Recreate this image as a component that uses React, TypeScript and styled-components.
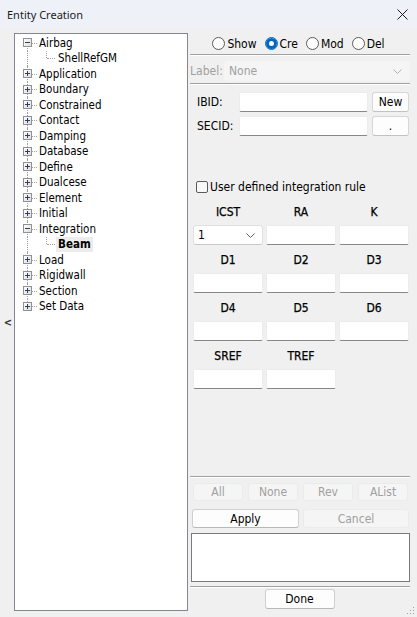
import React from "react"
import styled, { createGlobalStyle } from "styled-components"

const GlobalStyle = createGlobalStyle`
  html, body {
    margin: 0;
    padding: 0;
    background: #f0f0f0;
  }
  body {
    font-family: "DejaVu Sans Condensed", "DejaVu Sans", sans-serif;
    font-size: 12px;
    color: #000;
  }
`

type TreeItem = {
    label: string
    level: number
    expander?: "plus" | "minus"
    selected?: boolean
    last?: boolean
    first?: boolean
}

const tree: TreeItem[] = [
    { label: "Airbag", level: 0, expander: "minus", first: true },
    { label: "ShellRefGM", level: 1 },
    { label: "Application", level: 0, expander: "plus" },
    { label: "Boundary", level: 0, expander: "plus" },
    { label: "Constrained", level: 0, expander: "plus" },
    { label: "Contact", level: 0, expander: "plus" },
    { label: "Damping", level: 0, expander: "plus" },
    { label: "Database", level: 0, expander: "plus" },
    { label: "Define", level: 0, expander: "plus" },
    { label: "Dualcese", level: 0, expander: "plus" },
    { label: "Element", level: 0, expander: "plus" },
    { label: "Initial", level: 0, expander: "plus" },
    { label: "Integration", level: 0, expander: "minus" },
    { label: "Beam", level: 1, selected: true },
    { label: "Load", level: 0, expander: "plus" },
    { label: "Rigidwall", level: 0, expander: "plus" },
    { label: "Section", level: 0, expander: "plus" },
    { label: "Set Data", level: 0, expander: "plus", last: true },
]

const fields = ["ICST", "RA", "K", "D1", "D2", "D3", "D4", "D5", "D6", "SREF", "TREF"]

const Expander: React.FC<{ kind: "plus" | "minus" }> = ({ kind }) => (
    <ExpanderSvg width="9" height="9" viewBox="0 0 9 9">
        <defs>
            <linearGradient id={"eg" + kind} x1="0" y1="0" x2="1" y2="1">
                <stop offset="0" stopColor="#ffffff" />
                <stop offset="1" stopColor="#dcdcdc" />
            </linearGradient>
        </defs>
        <rect x="0.5" y="0.5" width="8" height="8" fill={"url(#eg" + kind + ")"} stroke="#919191" />
        <line x1="2" y1="4.5" x2="7" y2="4.5" stroke="#2b3f6b" />
        {kind === "plus" && <line x1="4.5" y1="2" x2="4.5" y2="7" stroke="#2b3f6b" />}
    </ExpanderSvg>
)

export default function App() {
    return (
        <Window>
            <GlobalStyle />
            <TitleBar>
                <Title>Entity Creation</Title>
                <svg width="11" height="11" viewBox="0 0 11 11">
                    <line x1="0.5" y1="0.5" x2="10.5" y2="10.5" stroke="#1a1a1a" strokeWidth="1" />
                    <line x1="10.5" y1="0.5" x2="0.5" y2="10.5" stroke="#1a1a1a" strokeWidth="1" />
                </svg>
            </TitleBar>
            <Body>
                <Collapser>&lt;</Collapser>
                <TreeBox>
                    {tree.map((item) => (
                        <TreeRow key={item.label}>
                            <Gutter $up={!item.first || item.level > 0} $down={!item.last} $dash={item.level === 0}>
                                {item.expander && <Expander kind={item.expander} />}
                            </Gutter>
                            {item.level === 1 && <ChildGutter />}
                            <TreeLabel $selected={item.selected}>{item.label}</TreeLabel>
                        </TreeRow>
                    ))}
                </TreeBox>
                <Panel>
                    <RadioRow>
                        <RadioItem><Radio /><span>Show</span></RadioItem>
                        <RadioItem><Radio $checked /><span>Cre</span></RadioItem>
                        <RadioItem><Radio /><span>Mod</span></RadioItem>
                        <RadioItem><Radio /><span>Del</span></RadioItem>
                    </RadioRow>
                    <Separator />
                    <LabelRow>
                        <DimText>Label:</DimText>
                        <Combo $disabled>
                            <span>None</span>
                            <Chevron color="#b0b0b0" />
                        </Combo>
                    </LabelRow>
                    <Separator $top={2} />
                    <IdRow $top={6}>
                        <IdLabel>IBID:</IdLabel>
                        <Edit $width={129} />
                        <SmallButton>New</SmallButton>
                    </IdRow>
                    <IdRow $top={3}>
                        <IdLabel>SECID:</IdLabel>
                        <Edit $width={129} />
                        <SmallButton>.</SmallButton>
                    </IdRow>
                    <CheckRow>
                        <CheckBox />
                        <span>User defined integration rule</span>
                    </CheckRow>
                    <FieldGrid>
                        {fields.map((f) => (
                            <Field key={f}>
                                <FieldLabel>{f}</FieldLabel>
                                {f === "ICST" ? (
                                    <Combo>
                                        <span>1</span>
                                        <Chevron color="#606060" />
                                    </Combo>
                                ) : (
                                    <Edit />
                                )}
                            </Field>
                        ))}
                    </FieldGrid>
                    <Spacer />
                    <Separator />
                    <ButtonRow $top={5} $gap={5} $left={3}>
                        <PushButton $width={50} $disabled>All</PushButton>
                        <PushButton $width={50} $disabled>None</PushButton>
                        <PushButton $width={50} $disabled>Rev</PushButton>
                        <PushButton $width={50} $disabled>AList</PushButton>
                    </ButtonRow>
                    <ButtonRow $top={8} $gap={4} $left={2}>
                        <PushButton $width={107} $height={19}>Apply</PushButton>
                        <PushButton $width={106} $height={19} $disabled>Cancel</PushButton>
                    </ButtonRow>
                    <MessageBox />
                    <Separator $top={4} />
                    <DoneRow>
                        <PushButton $width={70} $height={20}>Done</PushButton>
                    </DoneRow>
                </Panel>
            </Body>
            <Grip width="8" height="8" viewBox="0 0 8 8">
                <rect x="6" y="0" width="1" height="1" fill="#a0a0a0" />
                <rect x="3" y="3" width="1" height="1" fill="#a0a0a0" />
                <rect x="6" y="3" width="1" height="1" fill="#a0a0a0" />
                <rect x="0" y="6" width="1" height="1" fill="#a0a0a0" />
                <rect x="3" y="6" width="1" height="1" fill="#a0a0a0" />
                <rect x="6" y="6" width="1" height="1" fill="#a0a0a0" />
            </Grip>
        </Window>
    )
}

const Chevron: React.FC<{ color: string }> = ({ color }) => (
    <svg width="9" height="5" viewBox="0 0 9 5">
        <polyline points="0.5,0.5 4.5,4.5 8.5,0.5" fill="none" stroke={color} strokeWidth="1" />
    </svg>
)

const Window = styled.div`
    position: relative;
    width: 417px;
    height: 617px;
    display: flex;
    flex-direction: column;
    overflow: hidden;
    background: #f0f0f0;
`
const TitleBar = styled.div`
    height: 28px;
    flex: none;
    display: flex;
    align-items: center;
    justify-content: space-between;
    padding: 0 9px 0 7px;
    background: #eef2f8;
`
const Title = styled.span`
    font-family: "Noto Sans", "Open Sans", sans-serif;
    font-size: 11px;
    color: #1a1a1a;
`
const Body = styled.div`
    flex: 1;
    display: flex;
    padding: 5px 7px 6px 0;
    min-height: 0;
`
const Collapser = styled.div`
    width: 14px;
    display: flex;
    align-items: center;
    justify-content: center;
    font-family: "DejaVu Sans", sans-serif;
    font-size: 10px;
    font-weight: bold;
    color: #333;
    padding-left: 2px;
    box-sizing: border-box;
`
const TreeBox = styled.div`
    width: 174px;
    box-sizing: border-box;
    border: 1px solid #828790;
    background: #fff;
    padding-top: 1px;
`
const TreeRow = styled.div`
    height: 15.5px;
    display: flex;
    align-items: stretch;
    padding-left: 3px;
`
const Gutter = styled.span<{ $up?: boolean; $down?: boolean; $dash?: boolean }>`
    position: relative;
    width: 19px;
    flex: none;
    display: flex;
    align-items: center;
    &::before {
        content: "";
        position: absolute;
        left: 9px;
        top: ${(p) => (p.$up ? "0" : "50%")};
        bottom: ${(p) => (p.$down ? "0" : "50%")};
        border-left: 1px dotted #a0a0a0;
    }
    &::after {
        content: "";
        display: ${(p) => (p.$dash ? "block" : "none")};
        position: absolute;
        left: 14px;
        right: 0;
        top: 50%;
        border-top: 1px dotted #a0a0a0;
    }
`
const ChildGutter = styled.span`
    position: relative;
    width: 19px;
    flex: none;
    &::before {
        content: "";
        position: absolute;
        left: 9px;
        top: 0;
        height: 50%;
        border-left: 1px dotted #a0a0a0;
    }
    &::after {
        content: "";
        position: absolute;
        left: 10px;
        right: 1px;
        top: 50%;
        border-top: 1px dotted #a0a0a0;
    }
`
const ExpanderSvg = styled.svg`
    position: relative;
    z-index: 1;
    margin-left: 5px;
    display: block;
`
const TreeLabel = styled.span<{ $selected?: boolean }>`
    display: flex;
    align-items: center;
    font-size: 11.5px;
    margin-left: ${(p) => (p.$selected ? "0" : "2px")};
    padding: 0 ${(p) => (p.$selected ? "2px" : "0")};
    font-weight: ${(p) => (p.$selected ? "bold" : "normal")};
    background: ${(p) => (p.$selected ? "#ececec" : "transparent")};
    white-space: nowrap;
`
const Panel = styled.div`
    width: 220px;
    margin-left: 2px;
    display: flex;
    flex-direction: column;
`
const RadioRow = styled.div`
    height: 21px;
    display: flex;
    align-items: center;
    justify-content: center;
    gap: 8px;
    padding-right: 3px;
`
const RadioItem = styled.label`
    display: flex;
    align-items: center;
    gap: 2px;
`
const Radio = styled.span<{ $checked?: boolean }>`
    width: 13px;
    height: 13px;
    box-sizing: border-box;
    border-radius: 50%;
    border: 1px solid ${(p) => (p.$checked ? "#0067c0" : "#5a5a5a")};
    background: #fff;
    box-shadow: ${(p) => (p.$checked ? "inset 0 0 0 3px #0067c0" : "none")};
`
const Separator = styled.div<{ $top?: number }>`
    margin-top: ${(p) => p.$top ?? 0}px;
    height: 0;
    border-top: 1px solid #a0a0a0;
    border-bottom: 1px solid #fff;
    flex: none;
`
const LabelRow = styled.div`
    margin-top: 5px;
    height: 20px;
    display: flex;
    align-items: center;
`
const DimText = styled.span`
    width: 34px;
    color: #a0a0a0;
`
const Combo = styled.div<{ $disabled?: boolean }>`
    flex: 1;
    height: 20px;
    box-sizing: border-box;
    display: flex;
    align-items: center;
    justify-content: space-between;
    padding: 0 7px 0 4px;
    border-radius: 3px;
    border: 1px solid ${(p) => (p.$disabled ? "#f5f5f5" : "#e0e0e0")};
    border-bottom-color: ${(p) => (p.$disabled ? "#f5f5f5" : "#c8c8c8")};
    background: ${(p) => (p.$disabled ? "#f5f5f5" : "#fff")};
    color: ${(p) => (p.$disabled ? "#a0a0a0" : "#000")};
`
const IdRow = styled.div<{ $top: number }>`
    margin-top: ${(p) => p.$top}px;
    height: 21px;
    display: flex;
    align-items: center;
    padding-left: 7px;
    gap: 3px;
`
const IdLabel = styled.span`
    width: 39px;
`
const Edit = styled.div<{ $width?: number }>`
    width: ${(p) => (p.$width ? p.$width + "px" : "auto")};
    height: 20px;
    box-sizing: border-box;
    background: #fff;
    border: 1px solid #ececec;
    border-bottom: 1px solid #878787;
    border-radius: 2px;
`
const SmallButton = styled.div`
    width: 37px;
    height: 20px;
    margin-left: 1px;
    box-sizing: border-box;
    display: flex;
    align-items: center;
    justify-content: center;
    background: #fdfdfd;
    border: 1px solid #d6d6d6;
    border-bottom-color: #c2c2c2;
    border-radius: 3px;
`
const CheckRow = styled.label`
    margin-top: 43px;
    height: 15px;
    display: flex;
    align-items: center;
    gap: 2px;
    padding-left: 6px;
`
const CheckBox = styled.span`
    width: 12px;
    height: 12px;
    box-sizing: border-box;
    border: 1px solid #5a5a5a;
    border-radius: 2px;
    background: #f8f8f8;
`
const FieldGrid = styled.div`
    margin-top: 8px;
    padding-left: 3px;
    display: grid;
    grid-template-columns: repeat(3, 70px);
    column-gap: 3px;
    row-gap: 5px;
`
const Field = styled.div`
    display: flex;
    flex-direction: column;
    gap: 3px;
`
const FieldLabel = styled.div`
    height: 20px;
    display: flex;
    align-items: center;
    justify-content: center;
    -webkit-text-stroke: 0.25px #000;
`
const Spacer = styled.div`
    flex: 1;
`
const ButtonRow = styled.div<{ $top: number; $gap: number; $left: number }>`
    margin-top: ${(p) => p.$top}px;
    padding-left: ${(p) => p.$left}px;
    display: flex;
    gap: ${(p) => p.$gap}px;
`
const PushButton = styled.div<{ $width: number; $height?: number; $disabled?: boolean }>`
    width: ${(p) => p.$width}px;
    height: ${(p) => p.$height ?? 18}px;
    box-sizing: border-box;
    display: flex;
    align-items: center;
    justify-content: center;
    border-radius: 3px;
    background: ${(p) => (p.$disabled ? "#f5f5f5" : "#fdfdfd")};
    border: 1px solid ${(p) => (p.$disabled ? "#ebebeb" : "#d0d0d0")};
    border-bottom-color: ${(p) => (p.$disabled ? "#ebebeb" : "#b8b8b8")};
    color: ${(p) => (p.$disabled ? "#a0a0a0" : "#000")};
`
const MessageBox = styled.div`
    margin: 5px 0 0 1px;
    height: 49px;
    box-sizing: border-box;
    background: #fff;
    border: 1px solid #7a7a7a;
`
const DoneRow = styled.div`
    margin-top: 1px;
    margin-bottom: 2px;
    display: flex;
    justify-content: center;
    padding-right: 1px;
`
const Grip = styled.svg`
    position: absolute;
    right: 2px;
    bottom: 2px;
`
